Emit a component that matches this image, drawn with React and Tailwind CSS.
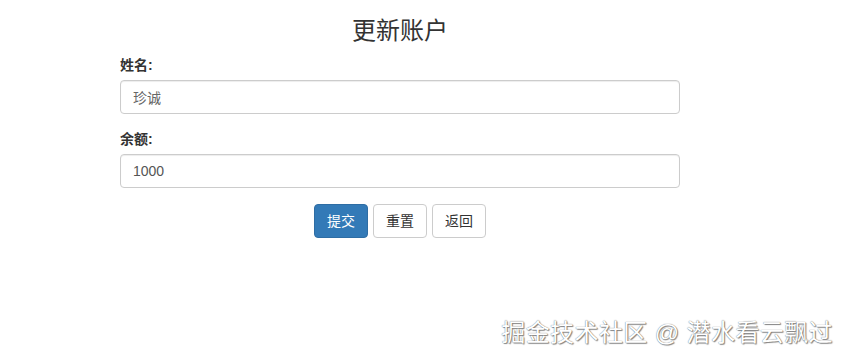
export default function App() {
  const font = { fontFamily: '"Liberation Sans", "Noto Sans CJK SC", sans-serif' };
  return (
    <div className="relative h-[363px] w-full bg-white text-[14px] text-[#333]" style={font}>
      <div className="ml-[120px] w-[560px] pt-[18px]">
        <h3 className="text-center text-[24px] leading-[26px] font-normal text-[#333]">更新账户</h3>
        <div className="mt-[11px]">
          <label className="block font-bold leading-[20px] mb-[5px]">姓名:</label>
          <input
            readOnly
            value="珍诚"
            className="block w-full h-[34px] px-[12px] rounded-[4px] border border-[#ccc] text-[14px] text-[#666] shadow-[inset_0_1px_1px_rgba(0,0,0,0.075)] outline-none"
          />
        </div>
        <div className="mt-[15px]">
          <label className="block font-bold leading-[20px] mb-[5px]">余额:</label>
          <input
            readOnly
            value="1000"
            className="block w-full h-[34px] px-[12px] rounded-[4px] border border-[#ccc] text-[14px] text-[#555] shadow-[inset_0_1px_1px_rgba(0,0,0,0.075)] outline-none"
          />
        </div>
        <div className="mt-[16px] flex justify-center gap-[5px]">
          <button className="h-[34px] w-[54px] rounded-[4px] border border-[#2e6da4] bg-[#337ab7] text-white leading-[20px]">提交</button>
          <button className="h-[34px] w-[54px] rounded-[4px] border border-[#ccc] bg-white text-[#333] leading-[20px]">重置</button>
          <button className="h-[34px] w-[54px] rounded-[4px] border border-[#ccc] bg-white text-[#333] leading-[20px]">返回</button>
        </div>
      </div>
      <div
        className="absolute right-[11px] top-[319px] text-[24px] leading-[28px] tracking-[0.4px] text-white whitespace-nowrap"
        style={{ textShadow: '0 0 1px #555, 1px 1px 1px #888' }}
      >
        掘金技术社区 @ 潜水看云飘过
      </div>
    </div>
  );
}
